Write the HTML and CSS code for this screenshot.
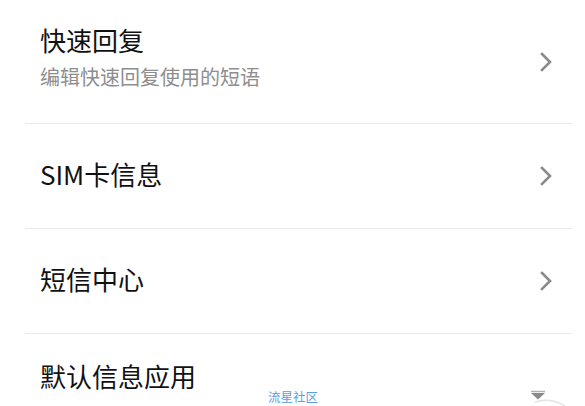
FILE: index.html
```html
<!DOCTYPE html>
<html lang="zh-CN">
<head>
<meta charset="utf-8">
<title>短信设置</title>
<link rel="stylesheet" href="styles.css">
</head>
<body>
<ul class="settings">
  <li class="row row-tall">
    <div class="text">
      <div class="title">快速回复</div>
      <div class="desc">编辑快速回复使用的短语</div>
    </div>
    <svg class="chevron" viewBox="0 0 12 20" width="12" height="20"><path d="M2 2 L10 10 L2 18"/></svg>
  </li>
  <li class="row">
    <div class="text"><div class="title">SIM卡信息</div></div>
    <svg class="chevron" viewBox="0 0 12 20" width="12" height="20"><path d="M2 2 L10 10 L2 18"/></svg>
  </li>
  <li class="row">
    <div class="text"><div class="title">短信中心</div></div>
    <svg class="chevron" viewBox="0 0 12 20" width="12" height="20"><path d="M2 2 L10 10 L2 18"/></svg>
  </li>
  <li class="row row-top">
    <div class="text"><div class="title">默认信息应用</div></div>
  </li>
</ul>
<div class="watermark">流星社区</div>
<svg class="corner-mark" viewBox="0 0 40 16" width="40" height="16">
  <path class="bar" d="M3 1.5 H17"/>
  <path class="tri" d="M3 3 H17 L10 9.5 Z"/>
  <path class="arc" d="M7 12 Q22 7 37 16"/>
</svg>
</body>
</html>
```

FILE: styles.css
```css
html, body {
  margin: 0;
  padding: 0;
  background: #ffffff;
  overflow: hidden;
}

body {
  font-family: "Noto Sans CJK SC", "Noto Sans", sans-serif;
  color: #111111;
  position: relative;
  width: 585px;
  height: 406px;
}

.settings {
  list-style: none;
  margin: 0 13px 0 25px;
  padding: 0;
}

.row {
  display: flex;
  align-items: center;
  justify-content: space-between;
  height: 104px;
  padding: 0 20px 0 15px;
  border-top: 1px solid #e8e8e8;
}

.row-tall {
  height: 123px;
  border-top: none;
}

/* last entry: text sits near the top, as in the tall entry */
.row-top {
  height: auto;
  align-items: flex-start;
  padding-top: 24px;
}

.text {
  padding-bottom: 5px;
}

.title {
  font-size: 26px;
  line-height: 36px;
  color: #111111;
}

.desc {
  font-size: 20px;
  line-height: 38px;
  color: #8e8e8e;
}

.chevron {
  flex: none;
  fill: none;
  stroke: #8a8a8a;
  stroke-width: 2.6;
  stroke-linecap: square;
}

.watermark {
  position: absolute;
  left: 268px;
  top: 389px;
  font-size: 12.5px;
  line-height: 16px;
  color: #5a9ee8;
}

.corner-mark {
  position: absolute;
  left: 528px;
  top: 390px;
}

.corner-mark .bar {
  stroke: #b0b0b0;
  stroke-width: 1.5;
}

.corner-mark .tri {
  fill: #8a8a8a;
}

.corner-mark .arc {
  fill: none;
  stroke: #e4e4e4;
  stroke-width: 1.5;
}
```
